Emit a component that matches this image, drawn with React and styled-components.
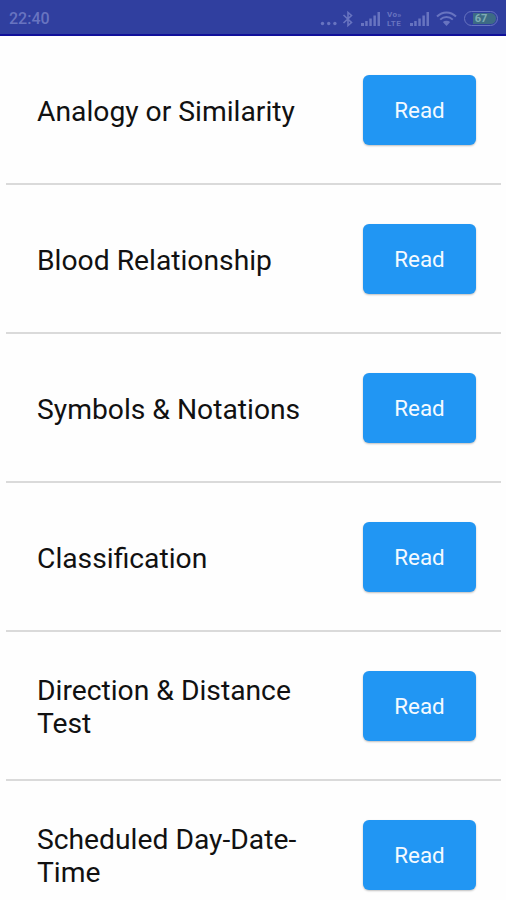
import React from "react";
import styled, { createGlobalStyle } from "styled-components";

const GlobalStyle = createGlobalStyle`
  * {
    box-sizing: border-box;
  }
  body {
    margin: 0;
    background: #fefefe;
    font-family: Roboto, "Liberation Sans", sans-serif;
  }
`;

const Screen = styled.div`
  width: 506px;
  height: 900px;
  overflow: hidden;
`;

const StatusBar = styled.header`
  height: 36px;
  padding: 3px 8px 0 9px;
  display: flex;
  align-items: center;
  justify-content: space-between;
  background: #303f9f;
  border-bottom: 2px solid #10109a;
  color: #6874c0;
`;

const Clock = styled.span`
  font-size: 16px;
  font-weight: 500;
`;

const StatusIcons = styled.div`
  display: flex;
  align-items: center;
  svg {
    display: block;
  }
`;

const Slot = styled.span`
  margin-left: ${({ $gap }) => $gap}px;
`;

const Volte = styled.span`
  margin-left: 6px;
  width: 17px;
  display: flex;
  flex-direction: column;
  font-size: 8px;
  font-weight: 700;
  letter-spacing: 0.4px;
  line-height: 9px;
`;

const Battery = styled.span`
  margin-left: 7px;
  width: 34px;
  height: 15px;
  padding: 1px;
  border: 1.5px solid #6874c0;
  border-radius: 8px;
`;

const Charge = styled.span`
  height: 100%;
  display: flex;
  align-items: center;
  justify-content: center;
  border-radius: 6px;
  background: linear-gradient(90deg, #303f9f 22%, #3d6b85 22%);
  color: #7fabb4;
  font-size: 11px;
  font-weight: 700;
`;

const List = styled.ul`
  margin: 0;
  padding: 0 5px 0 6px;
  list-style: none;
`;

const Row = styled.li`
  height: 149px;
  padding: 0 25px 0 31px;
  display: flex;
  align-items: center;
  justify-content: space-between;
  border-bottom: 2px solid #dadada;
`;

const Title = styled.span`
  width: 280px;
  padding-top: 3px;
  color: #111;
  font-size: 28.25px;
  line-height: 33px;
`;

const ReadButton = styled.button`
  width: 113px;
  height: 70px;
  padding: 0;
  border: 0;
  border-radius: 6px;
  background: #2196f3;
  box-shadow: 0 1px 2px rgba(0, 0, 0, 0.25);
  color: #f4faff;
  font-family: inherit;
  font-size: 22.4px;
  font-weight: 400;
`;

const topics = [
  "Analogy or Similarity",
  "Blood Relationship",
  "Symbols & Notations",
  "Classification",
  "Direction & Distance Test",
  "Scheduled Day-Date-Time",
];

const Dots = () => (
  <svg width="18" height="18" fill="currentColor">
    <circle cx="2.5" cy="13.5" r="1.7" />
    <circle cx="8.7" cy="13.5" r="1.7" />
    <circle cx="14.9" cy="13.5" r="1.7" />
  </svg>
);

const Bluetooth = () => (
  <svg width="12" height="18" fill="none" stroke="currentColor" strokeWidth="1.6">
    <path d="M1.5 5 9.5 12.5 6 15.5V2.5L9.5 5.5 1.5 13" />
  </svg>
);

const Signal = () => (
  <svg width="20" height="18" fill="currentColor">
    <path d="M0 13h3v3H0zM4.2 11h2.5v5H4.2zM8.3 8.5h2.5V16H8.3zM12.4 5.5h2.5V16h-2.5zM16.5 2H19v14h-2.5z" />
  </svg>
);

const Wifi = () => (
  <svg width="21" height="18" fill="none" stroke="currentColor" strokeWidth="2">
    <path d="M1 6.5C6.5 1 14.5 1 20 6.5M4.2 9.6c3.7-3.6 8.9-3.6 12.6 0" />
    <path d="M10.5 16 6.8 12c2.2-1.8 5.2-1.8 7.4 0z" fill="currentColor" stroke="none" />
  </svg>
);

export default function App() {
  return (
    <Screen>
      <GlobalStyle />
      <StatusBar>
        <Clock>22:40</Clock>
        <StatusIcons>
          <Dots />
          <Slot $gap={4}>
            <Bluetooth />
          </Slot>
          <Slot $gap={7}>
            <Signal />
          </Slot>
          <Volte>
            <span>Vo»</span>
            <span>LTE</span>
          </Volte>
          <Slot $gap={6}>
            <Signal />
          </Slot>
          <Slot $gap={6}>
            <Wifi />
          </Slot>
          <Battery>
            <Charge>67</Charge>
          </Battery>
        </StatusIcons>
      </StatusBar>
      <List>
        {topics.map((topic) => (
          <Row key={topic}>
            <Title>{topic}</Title>
            <ReadButton>Read</ReadButton>
          </Row>
        ))}
      </List>
    </Screen>
  );
}
